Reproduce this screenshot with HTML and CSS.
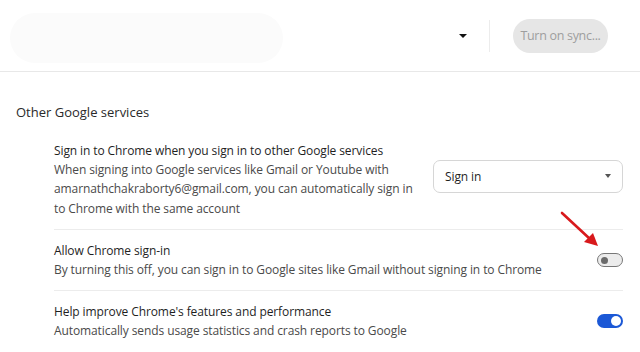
FILE: index.html
```html
<!DOCTYPE html>
<html>
<head>
<meta charset="utf-8">
<link rel="stylesheet" href="styles.css">
</head>
<body>
<header class="topbar">
  <div class="blur-pill"></div>
  <div class="spacer"></div>
  <span class="top-caret"></span>
  <span class="vsep"></span>
  <button class="sync-btn">Turn on sync...</button>
</header>
<h2 class="section-title">Other Google services</h2>
<div class="list">
  <div class="row">
    <div class="text">
      <div class="title">Sign in to Chrome when you sign in to other Google services</div>
      <div class="desc">When signing into Google services like Gmail or Youtube with<br>amarnathchakraborty6@gmail.com, you can automatically sign in<br>to Chrome with the same account</div>
    </div>
    <div class="select"><span>Sign in</span><span class="sel-caret"></span></div>
  </div>
  <div class="row">
    <div class="text">
      <div class="title">Allow Chrome sign-in</div>
      <div class="desc">By turning this off, you can sign in to Google sites like Gmail without signing in to Chrome</div>
    </div>
    <span class="toggle off"><span class="knob"></span></span>
  </div>
  <div class="row">
    <div class="text">
      <div class="title">Help improve Chrome's features and performance</div>
      <div class="desc">Automatically sends usage statistics and crash reports to Google</div>
    </div>
    <span class="toggle on"><span class="knob"></span></span>
  </div>
</div>
<svg class="annot-arrow" width="640" height="352" viewBox="0 0 640 352">
  <line x1="562" y1="213" x2="590" y2="239" stroke="#d8191c" stroke-width="2.6" stroke-linecap="round"/>
  <polygon points="598,246 584,242 593,233" fill="#d8191c"/>
</svg>
</body>
</html>
```
FILE: styles.css
```css
* { box-sizing: border-box; }
html, body { margin: 0; padding: 0; background: #ffffff; }
body {
  font-family: "Open Sans", "Noto Sans", sans-serif;
  font-size: 12px;
  letter-spacing: -0.1px;
  color: #1f1f1f;
  width: 640px;
  height: 352px;
  overflow: hidden;
  position: relative;
}
.topbar {
  height: 72px;
  border-bottom: 1px solid #e8e8e8;
  display: flex;
  align-items: center;
  padding: 0 32px 0 10px;
}
.blur-pill {
  width: 273px;
  height: 50px;
  border-radius: 25px;
  background: #fbfbfb;
  margin-top: 4px;
}
.spacer { flex: 1; }
.top-caret {
  width: 0; height: 0;
  border-left: 4px solid transparent;
  border-right: 4px solid transparent;
  border-top: 4px solid #111;
  margin-right: 22px;
  margin-top: 1px;
}
.vsep {
  width: 1px;
  height: 32px;
  background: #ececec;
  margin-right: 23px;
}
.sync-btn {
  font-family: inherit;
  font-size: 12.5px;
  letter-spacing: -0.3px;
  color: #9e9e9e;
  background: #e6e6e6;
  border: none;
  border-radius: 17px;
  height: 34px;
  width: 95px;
  padding: 0;
}
.section-title {
  margin: 0;
  padding: 30px 0 0 16px;
  font-size: 13px;
  font-weight: 500;
  letter-spacing: 0;
  line-height: 20px;
  color: #2a2a2a;
}
.list {
  margin: 8px 17px 0 54px;
}
.row {
  display: flex;
  align-items: center;
  padding: 11px 0 11px 0;
  border-bottom: 1px solid #ececec;
}
.text { flex: 1; line-height: 19.2px; white-space: nowrap; }
.title { color: #1f1f1f; }
.desc { color: #4a4a4a; }
.select {
  width: 190px;
  height: 33px;
  border: 1px solid #d6d6d6;
  border-radius: 7px;
  display: flex;
  align-items: center;
  justify-content: space-between;
  padding: 0 11px 0 11px;
  margin-top: -6px;
  color: #1f1f1f;
}
.sel-caret {
  width: 0; height: 0;
  border-left: 3.5px solid transparent;
  border-right: 3.5px solid transparent;
  border-top: 4px solid #555;
}
.toggle {
  width: 26px;
  height: 14px;
  border-radius: 7px;
  display: flex;
  align-items: center;
}
.toggle.off {
  background: #ececec;
  border: 1.5px solid #777;
  padding-left: 3px;
}
.toggle.off .knob {
  width: 7px; height: 7px; border-radius: 50%;
  background: #6b6b6b;
}
.toggle.on {
  background: #1b58d6;
  justify-content: flex-end;
  padding-right: 2px;
}
.toggle.on .knob {
  width: 10px; height: 10px; border-radius: 50%;
  background: #ffffff;
}
.annot-arrow {
  position: absolute;
  left: 0; top: 0;
  pointer-events: none;
}
```
